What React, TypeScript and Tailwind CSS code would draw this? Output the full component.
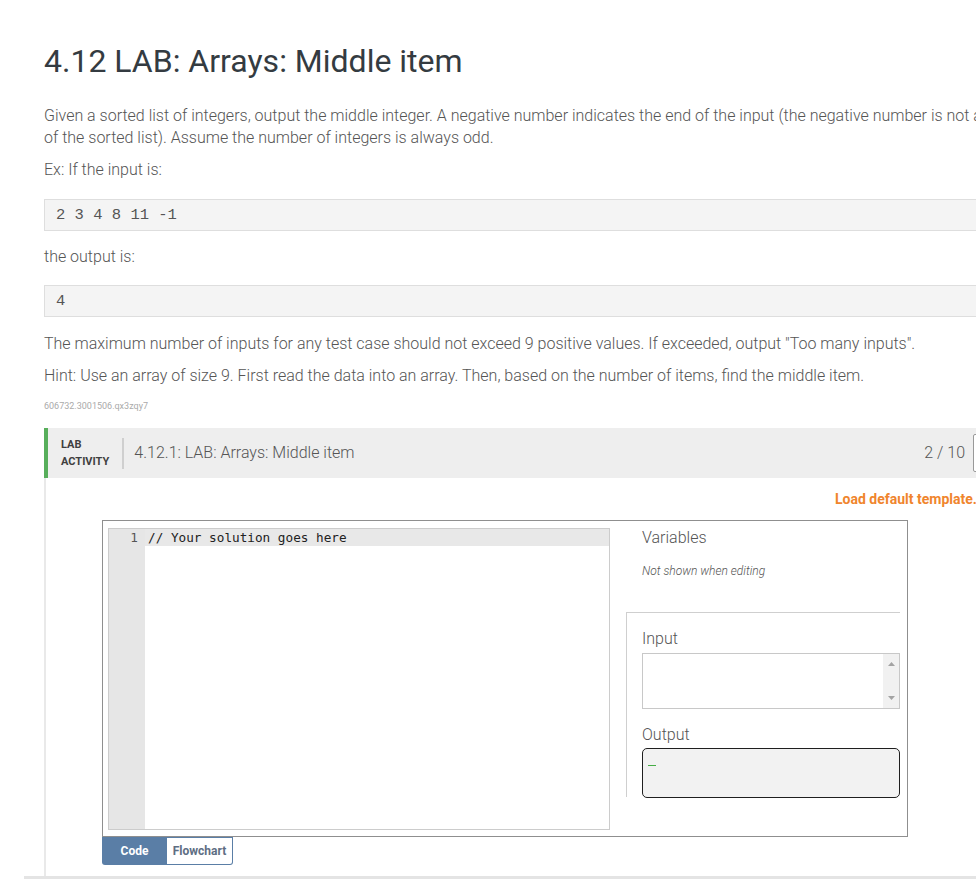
import React from "react";

const roboto = { fontFamily: "Roboto, 'Noto Sans', Arial, sans-serif" };

export default function App() {
  return (
    <main className="relative h-[879px] w-[976px] overflow-hidden bg-white" style={roboto}>
      <div className="w-[1000px] pl-[44px] pt-[42px]">
        {/* Problem statement */}
        <h1 className="text-[32px] leading-[38px] font-normal text-[#343b41]">
          4.12 LAB: Arrays: Middle item
        </h1>

        <p className="mt-[25px] text-[16px] leading-[22px] font-light text-[#555] whitespace-nowrap">
          Given a sorted list of integers, output the middle integer. A negative number indicates the end of the input (the negative number is not a part
          <br />
          of the sorted list). Assume the number of integers is always odd.
        </p>
        <p className="mt-[10px] text-[16px] leading-[22px] font-light text-[#555]">Ex: If the input is:</p>

        <pre className="mt-[18px] h-[32px] border border-[#dedede] bg-[#f4f4f4] pl-[11px] text-[15.5px] leading-[30px] text-[#555] font-['Liberation_Mono',monospace]">
          2 3 4 8 11 -1
        </pre>

        <p className="mt-[15px] text-[16px] leading-[22px] font-light text-[#555]">the output is:</p>

        <pre className="mt-[17px] h-[32px] border border-[#dedede] bg-[#f4f4f4] pl-[11px] text-[15.5px] leading-[30px] text-[#555] font-['Liberation_Mono',monospace]">
          4
        </pre>

        <p className="mt-[16px] text-[16px] leading-[22px] font-light text-[#555] whitespace-nowrap">
          The maximum number of inputs for any test case should not exceed 9 positive values. If exceeded, output "Too many inputs".
        </p>
        <p className="mt-[10px] text-[16px] leading-[22px] font-light text-[#555] whitespace-nowrap">
          Hint: Use an array of size 9. First read the data into an array. Then, based on the number of items, find the middle item.
        </p>
        <p className="mt-[13px] text-[9px] leading-[12px] text-[#aaa]">606732.3001506.qx3zqy7</p>

        {/* Lab activity */}
        <section className="mt-[16px] w-[966px]">
          <div className="flex h-[50px] items-center border-l-4 border-[#57ae5b] bg-[#eeeeee]">
            <div className="pl-[13px] text-[11px] leading-[17px] font-bold text-[#3f3f3f]">
              LAB
              <br />
              ACTIVITY
            </div>
            <div className="ml-[13px] h-[31px] w-[2px] bg-[#cfcfcf]" />
            <div className="ml-[10px] flex-1 text-[16px] font-light text-[#555]">4.12.1: LAB: Arrays: Middle item</div>
            <div className="text-[16px] font-light text-[#555]">2 / 10</div>
            <div className="ml-[8px] h-[38px] w-[37px] rounded-[2px] border border-[#999] bg-white" />
          </div>

          <div className="h-[399px] border-l-2 border-[#e9e9e9]">
            <div className="pt-[11px] pl-[789px] text-[14px] leading-[20px] font-bold text-[#f0852d] whitespace-nowrap">
              Load default template.
            </div>

            <div className="ml-[56px] mt-[11px] w-[806px]">
              <div className="flex h-[317px] border border-[#8f8f8f] pt-[7px] pr-[7px] pb-[6px] pl-[5px]">
                <CodeEditor />
                <div className="ml-[16px] flex flex-1 flex-col">
                  <div className="pl-[16px] text-[16px] leading-[20px] font-light text-[#555]">Variables</div>
                  <div className="mt-[14px] pl-[16px] text-[12px] italic font-light text-[#555]">Not shown when editing</div>
                  <div className="mt-[32px] h-[185px] border-t border-l border-[#cfcfcf] pl-[15px]">
                    <div className="mt-[16px] text-[16px] leading-[20px] font-light text-[#555]">Input</div>
                    <div className="mt-[4px] flex h-[56px] border border-[#c8c8c8] bg-white">
                      <div className="flex-1" />
                      <div className="flex w-[16px] flex-col items-center justify-between bg-[#f1f1f1] py-[8px]">
                        <svg width="7" height="4" viewBox="0 0 7 4"><path d="M0 4L3.5 0L7 4Z" fill="#a3a3a3" /></svg>
                        <svg width="7" height="4" viewBox="0 0 7 4"><path d="M0 0L3.5 4L7 0Z" fill="#a3a3a3" /></svg>
                      </div>
                    </div>
                    <div className="mt-[16px] text-[16px] leading-[20px] font-light text-[#555]">Output</div>
                    <div className="mt-[3px] h-[50px] rounded-[5px] border border-[#1f1f1f] bg-[#f2f2f2] pl-[5px] pt-[16px]">
                      <div className="h-[1px] w-[8px] bg-[#45ad45]" />
                    </div>
                  </div>
                </div>
              </div>

              <div className="flex">
                <button className="h-[28px] w-[65px] rounded-bl-[3px] bg-[#5a7ea6] text-[12px] font-bold text-white">Code</button>
                <button className="h-[28px] w-[66px] rounded-br-[3px] border border-l-0 border-[#5a7ea6] bg-white text-[12px] font-bold text-[#5e6e83]">
                  Flowchart
                </button>
              </div>
            </div>
          </div>
        </section>
      </div>

      <div className="absolute bottom-0 left-[24px] right-0 h-[3px] bg-[#e4e4e4]" />
    </main>
  );
}

function CodeEditor() {
  return (
    <div className="flex h-full w-[502px] border border-[#cccccc] bg-white">
      <div className="w-[36px] bg-[#e6e6e6] pr-[7px] text-right text-[12.7px] leading-[17px] text-[#555] font-['DejaVu_Sans_Mono',monospace]">
        1
      </div>
      <div className="flex-1">
        <div className="h-[17px] bg-[#e8e8e8] pl-[3px] text-[12.7px] leading-[17px] text-[#222] font-['DejaVu_Sans_Mono',monospace]">
          // Your solution goes here
        </div>
      </div>
    </div>
  );
}
